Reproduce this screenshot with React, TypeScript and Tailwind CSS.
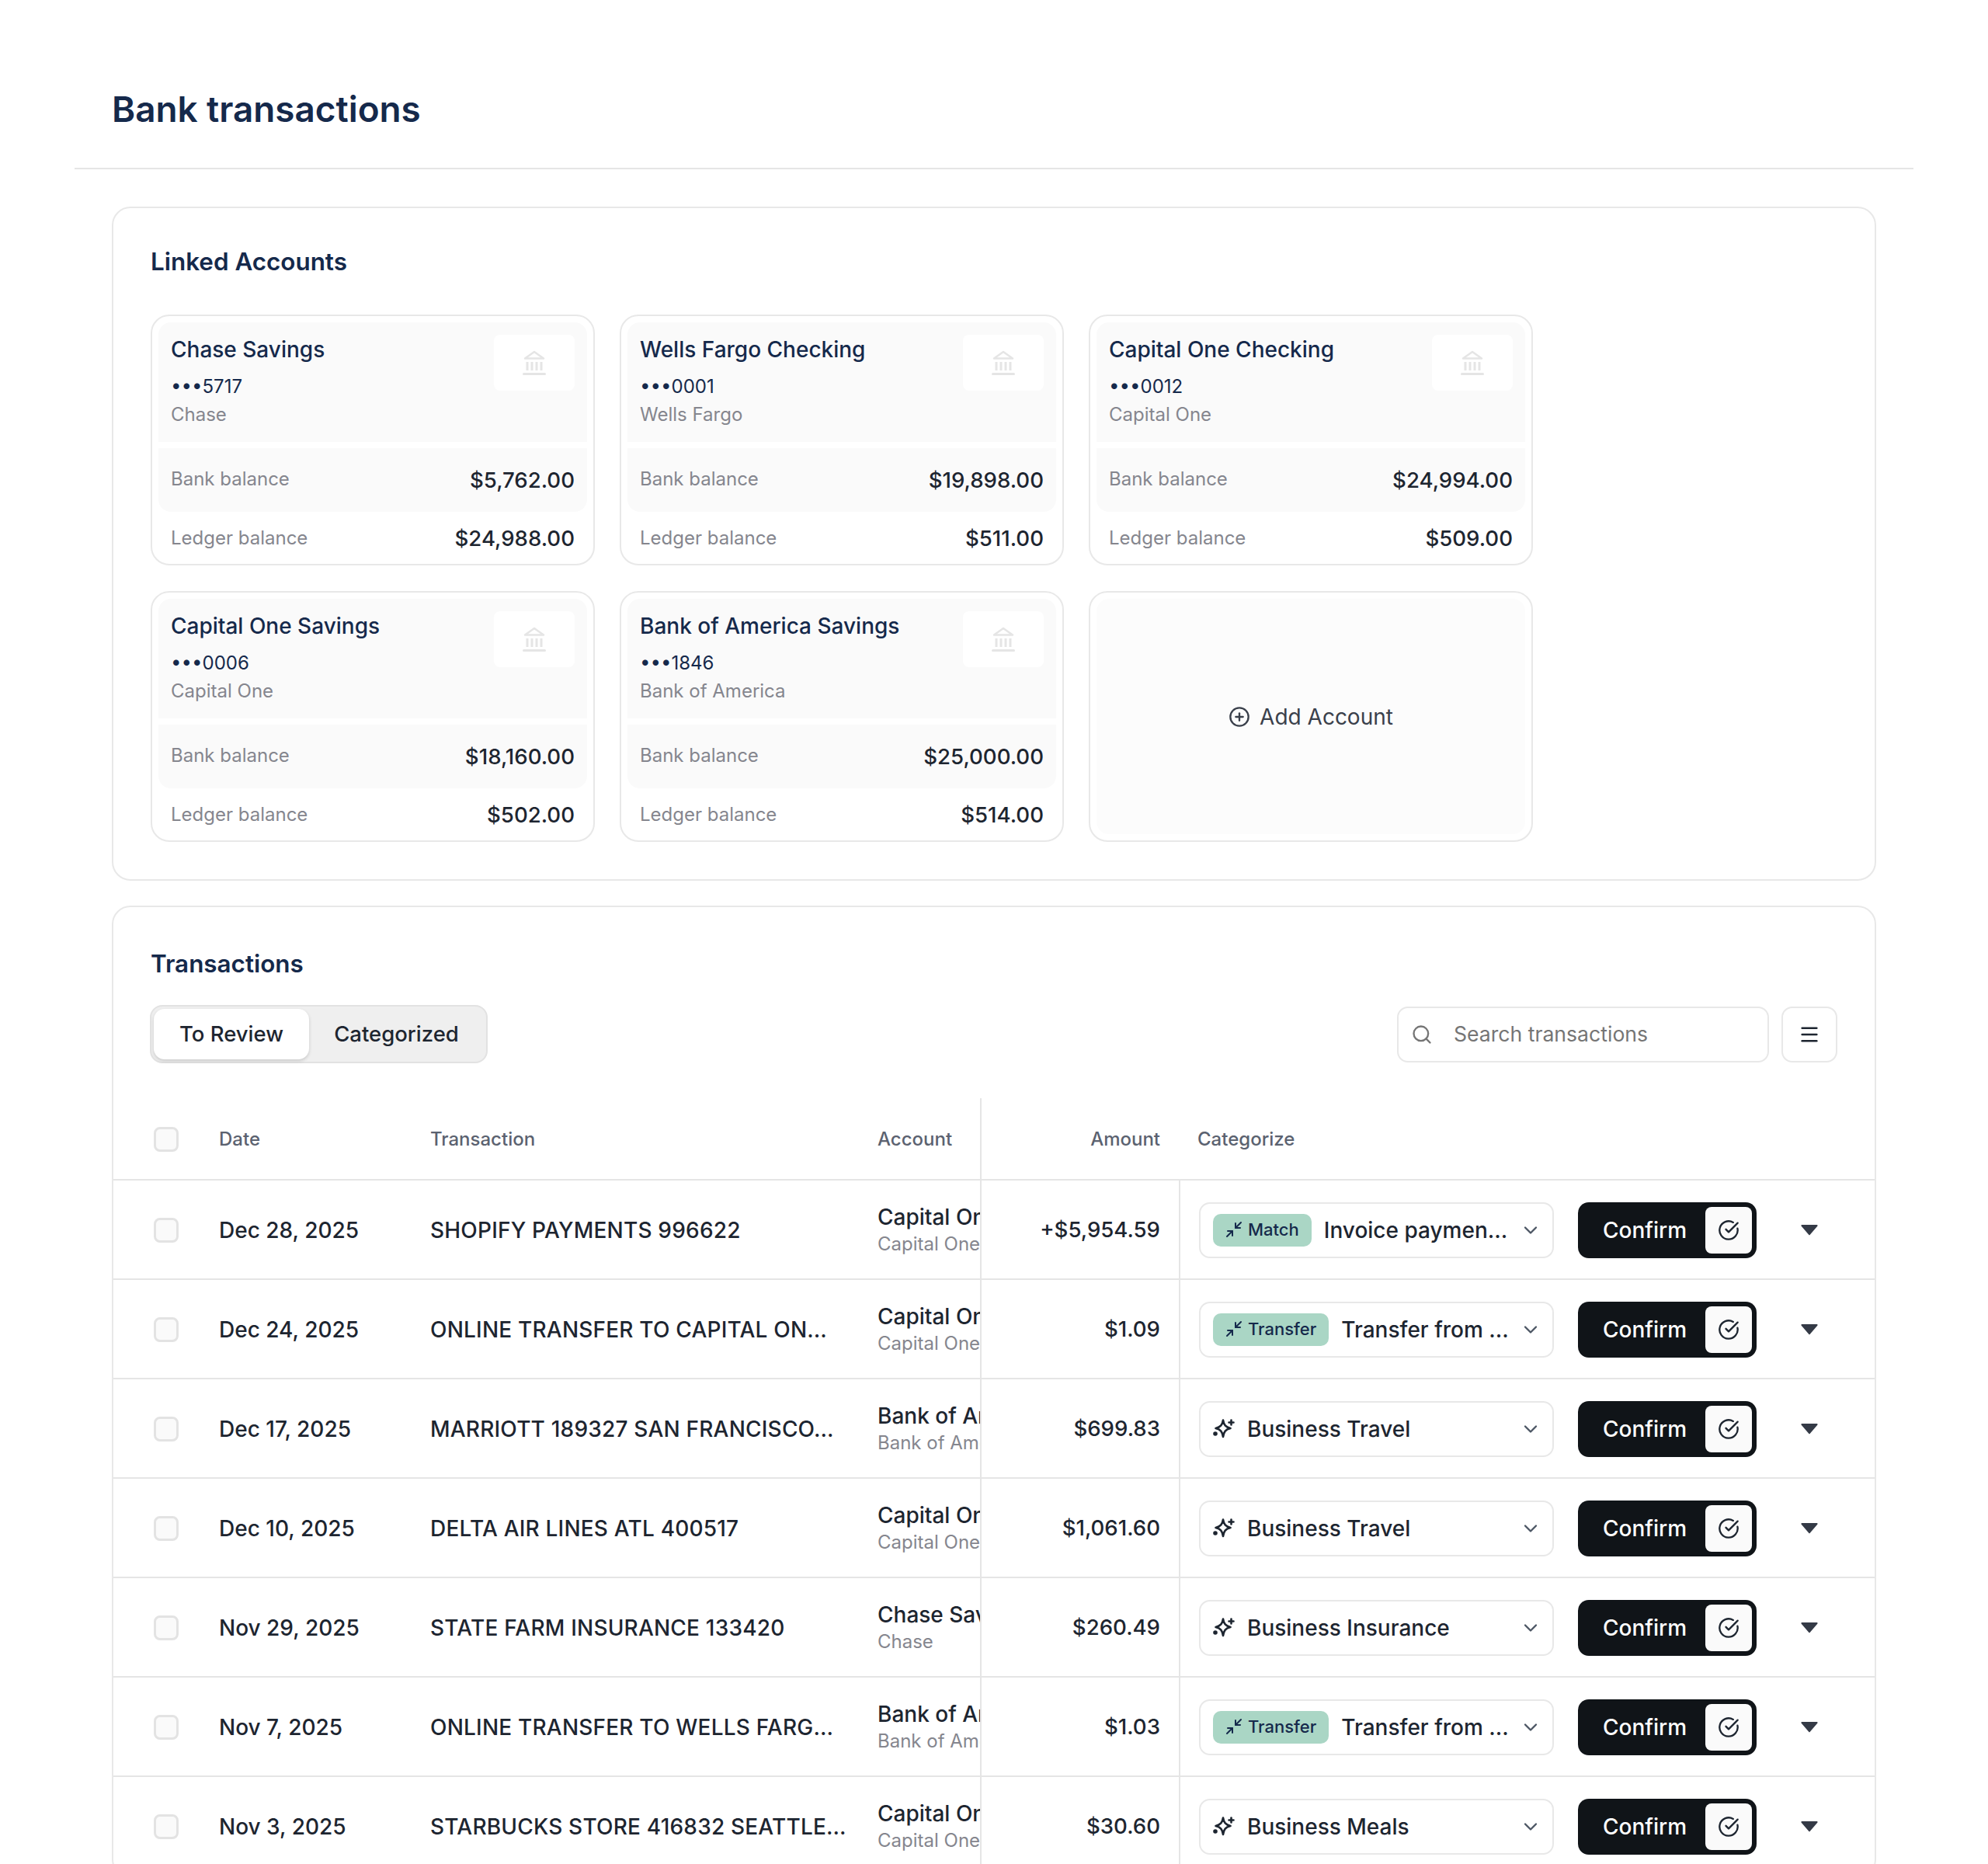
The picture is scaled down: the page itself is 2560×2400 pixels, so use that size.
import React from 'react';
import { ChevronDown, CircleCheckBig, CirclePlus, Menu, Minimize2, Search } from 'lucide-react';

interface Account {
  name: string;
  mask: string;
  bank: string;
  bankBalance: string;
  ledgerBalance: string;
}

interface Transaction {
  date: string;
  description: string;
  account: string;
  bank: string;
  amount: string;
  tag?: string;
  category: string;
}

const accounts: Account[] = [
  { name: 'Chase Savings', mask: '5717', bank: 'Chase', bankBalance: '$5,762.00', ledgerBalance: '$24,988.00' },
  { name: 'Wells Fargo Checking', mask: '0001', bank: 'Wells Fargo', bankBalance: '$19,898.00', ledgerBalance: '$511.00' },
  { name: 'Capital One Checking', mask: '0012', bank: 'Capital One', bankBalance: '$24,994.00', ledgerBalance: '$509.00' },
  { name: 'Capital One Savings', mask: '0006', bank: 'Capital One', bankBalance: '$18,160.00', ledgerBalance: '$502.00' },
  { name: 'Bank of America Savings', mask: '1846', bank: 'Bank of America', bankBalance: '$25,000.00', ledgerBalance: '$514.00' },
];

const transactions: Transaction[] = [
  { date: 'Dec 28, 2025', description: 'SHOPIFY PAYMENTS 996622', account: 'Capital One Checking', bank: 'Capital One', amount: '+$5,954.59', tag: 'Match', category: 'Invoice payment from Shopify' },
  { date: 'Dec 24, 2025', description: 'ONLINE TRANSFER TO CAPITAL ON…', account: 'Capital One Savings', bank: 'Capital One', amount: '$1.09', tag: 'Transfer', category: 'Transfer from Capital One' },
  { date: 'Dec 17, 2025', description: 'MARRIOTT 189327 SAN FRANCISCO…', account: 'Bank of America Savings', bank: 'Bank of America', amount: '$699.83', category: 'Business Travel' },
  { date: 'Dec 10, 2025', description: 'DELTA AIR LINES ATL 400517', account: 'Capital One Checking', bank: 'Capital One', amount: '$1,061.60', category: 'Business Travel' },
  { date: 'Nov 29, 2025', description: 'STATE FARM INSURANCE 133420', account: 'Chase Savings', bank: 'Chase', amount: '$260.49', category: 'Business Insurance' },
  { date: 'Nov 7, 2025', description: 'ONLINE TRANSFER TO WELLS FARG…', account: 'Bank of America Savings', bank: 'Bank of America', amount: '$1.03', tag: 'Transfer', category: 'Transfer from Bank of America' },
  { date: 'Nov 3, 2025', description: 'STARBUCKS STORE 416832 SEATTLE…', account: 'Capital One Checking', bank: 'Capital One', amount: '$30.60', category: 'Business Meals' },
];

function BankIcon() {
  return (
    <svg width="30" height="34" viewBox="0 0 30 34" fill="none" stroke="#e5e5e5">
      <path d="M3 11.5 15 3l12 8.500z" strokeWidth="2.500" strokeLinejoin="round" />
      <path d="M6 16v11M12 16v11M18 16v11M24 16v11" strokeWidth="3" />
      <path d="M1.500 31.500h27" strokeWidth="3" strokeLinecap="round" />
    </svg>
  );
}

function SparkIcon() {
  return (
    <svg width="28" height="28" viewBox="0 0 28 28" fill="none" stroke="#1d2530" strokeWidth="2.600" strokeLinejoin="round" strokeLinecap="round" className="shrink-0">
      <path d="M13 2.500c1 6 3 9 9.500 10.500-6.500 1.500-8.500 4.500-9.500 11-1-6.500-3-9.500-9.500-11 6.500-1.500 8.500-4.500 9.500-10.500z" />
      <path d="M23.500 2.500v6M20.500 5.500h6" />
      <circle cx="3" cy="20" r="1.500" fill="#1d2530" />
    </svg>
  );
}

function Checkbox() {
  return <div className="w-[32px] h-[32px] rounded-[8px] border-[3px] border-[#e3e3e3] bg-[#fafafa]"></div>;
}

function AccountCard({ account }: { account: Account }) {
  return (
    <div className="w-[572px] h-[323px] rounded-[24px] border-2 border-[#e8e8e8] px-[8px] pt-[8px] flex flex-col bg-white">
      <div className="h-[154px] bg-[#fafafa] rounded-t-[16px] px-[16px] pt-[14px] flex justify-between">
        <div className="flex flex-col">
          <div className="text-[28px] leading-[42px] font-medium text-[#15294b]">{account.name}</div>
          <div className="text-[24px] leading-[34px] mt-[10px] text-[#15294b]">•••{account.mask}</div>
          <div className="text-[24px] leading-[36px] mt-[1px] text-[#85868e]">{account.bank}</div>
        </div>
        <div className="w-[104px] h-[72px] mt-[2px] bg-white rounded-[8px] flex items-center justify-center">
          <BankIcon />
        </div>
      </div>
      <div className="h-[82px] mt-[8px] bg-[#fafafa] rounded-b-[16px] px-[16px] flex justify-between items-center">
        <span className="text-[24px] text-[#85868e] mb-[2px]">Bank balance</span>
        <span className="text-[27.600px] font-medium text-[#1d2530] mt-[1px]">{account.bankBalance}</span>
      </div>
      <div className="flex-1 px-[16px] flex justify-between items-center">
        <span className="text-[24px] text-[#85868e]">Ledger balance</span>
        <span className="text-[27.600px] font-medium text-[#1d2530] mt-[2px]">{account.ledgerBalance}</span>
      </div>
    </div>
  );
}

function TransactionRow({ row }: { row: Transaction }) {
  return (
    <div className="flex items-stretch h-[128px] border-b-2 border-[#e5e5e5]">
      <div className="w-[136px] pl-[52px] pt-[2px] flex items-center"><Checkbox /></div>
      <div className="w-[272px] pt-[2px] flex items-center text-[28px] font-medium text-[#1d2530]">{row.date}</div>
      <div className="w-[576px] pt-[2px] flex items-center text-[28px] font-medium tracking-[0.2px] text-[#1d2530]">
        <span className="w-[545px] truncate">{row.description}</span>
      </div>
      <div className="w-[134px] pb-[2px] border-r-2 border-[#e5e5e5] flex flex-col justify-center overflow-hidden whitespace-nowrap">
        <div className="text-[28px] leading-[40px] font-medium text-[#1d2530]">{row.account}</div>
        <div className="text-[24px] leading-[30px] text-[#85868e]">{row.bank}</div>
      </div>
      <div className="w-[254px] pr-[24px] pt-[2px] flex items-center justify-end text-[27.600px] font-medium text-[#1d2530]">{row.amount}</div>
      <div className="flex-1 border-l-2 border-[#e5e5e5] pl-[24px] pt-[2px] flex items-center">
        <div className="w-[457px] h-[72px] rounded-[14px] border-2 border-[#e8e8e8] pl-[16px] pr-[14px] flex items-center">
          {row.tag ? (
            <span className="h-[42px] pl-[15px] pr-[16px] pb-[2px] rounded-[10px] bg-[#aad6c5] flex items-center gap-[6px] text-[22px] font-medium text-[#15294b] shrink-0">
              <Minimize2 size={24} strokeWidth={2} color="#15294b" className="-my-[2px]" />
              {row.tag}
            </span>
          ) : (
            <SparkIcon />
          )}
          <span className="ml-[16px] flex-1 truncate text-[28px] font-medium text-[#1d2530]">{row.category}</span>
          <ChevronDown size={28} strokeWidth={2} color="#4b5563" className="ml-[8px] shrink-0" />
        </div>
        <div className="ml-[31px] w-[230px] h-[72px] rounded-[14px] bg-[#101418] p-[6px] pl-[32px] flex items-center justify-between">
          <span className="text-[28px] font-medium text-white">Confirm</span>
          <span className="w-[60px] h-[60px] rounded-[8px] bg-[#fafafa] flex items-center justify-center">
            <CircleCheckBig size={28} strokeWidth={2} color="#1d2530" />
          </span>
        </div>
        <div className="ml-[57px]">
          <svg width="22" height="14" viewBox="0 0 22 14" fill="#343a46">
            <path d="M1.500 0h19a1 1 0 0 1 .8 1.700l-9.500 11a1 1 0 0 1-1.600 0l-9.500-11A1 1 0 0 1 1.500 0z" />
          </svg>
        </div>
      </div>
    </div>
  );
}

export default function App() {
  return (
    <div className="w-[2560px] h-[2400px] overflow-hidden bg-white font-['Inter',sans-serif]">
      <div className="mx-[96px] h-[218px] border-b-2 border-[#e5e5e5] px-[48px] pt-[109px]">
        <h1 className="text-[45.800px] leading-[64px] font-semibold text-[#15294b]">Bank transactions</h1>
      </div>

      <div className="px-[144px] pt-[48px] flex flex-col gap-[32px]">
        {/* Linked accounts */}
        <div className="rounded-[24px] border-2 border-[#e8e8e8] px-[48px] pt-[45px] pb-[48px]">
          <h2 className="text-[31.400px] leading-[48px] font-semibold text-[#15294b] mb-[44px]">Linked Accounts</h2>
          <div className="flex flex-wrap gap-x-[32px] gap-y-[33px]">
            {accounts.map((account, i) => (
              <AccountCard key={i} account={account} />
            ))}
            <div className="w-[572px] h-[323px] rounded-[24px] border-2 border-[#e8e8e8] p-[8px]">
              <div className="h-full bg-[#fcfcfc] rounded-[16px] flex items-center justify-center gap-[12px] text-[28px] text-[#3a404b]">
                <CirclePlus size={28} strokeWidth={2} />
                Add Account
              </div>
            </div>
          </div>
        </div>

        {/* Transactions */}
        <div className="rounded-[24px] border-2 border-[#e8e8e8] pt-[49px]">
          <div className="px-[48px]">
            <h2 className="text-[31.400px] leading-[48px] font-semibold text-[#15294b] mb-[29px]">Transactions</h2>
            <div className="flex items-center justify-between">
              <div className="h-[75px] w-[435px] -ml-[1px] rounded-[16px] border-2 border-[#e2e2e2] bg-[#efefef] p-[3px] flex items-stretch text-[27.500px] font-medium text-[#1d2530]">
                <div className="w-[200px] rounded-[14px] bg-white shadow-[0_2px_4px_rgba(0,0,0,0.16)] flex items-center justify-center">To Review</div>
                <div className="flex-1 flex items-center justify-center">Categorized</div>
              </div>
              <div className="flex items-center gap-[16px]">
                <div className="w-[479px] h-[72px] rounded-[14px] border-2 border-[#e8e8e8] pl-[16px] flex items-center gap-[27px]">
                  <Search size={28} strokeWidth={2} color="#757575" />
                  <span className="text-[26.600px] text-[#757575]">Search transactions</span>
                </div>
                <div className="w-[72px] h-[72px] rounded-[14px] border-2 border-[#e8e8e8] flex items-center justify-center">
                  <Menu size={28} strokeWidth={2.200} color="#1d2530" />
                </div>
              </div>
            </div>
          </div>

          <div className="mt-[45px]">
            <div className="flex items-stretch h-[106px] border-b-2 border-[#e5e5e5] text-[24px] font-medium text-[#5b6270]">
              <div className="w-[136px] pl-[52px] pt-[2px] flex items-center"><Checkbox /></div>
              <div className="w-[272px] pt-[2px] flex items-center">Date</div>
              <div className="w-[576px] pt-[2px] flex items-center">Transaction</div>
              <div className="w-[134px] pt-[2px] border-r-2 border-[#e5e5e5] flex items-center">Account</div>
              <div className="w-[254px] pr-[24px] pt-[2px] flex items-center justify-end">Amount</div>
              <div className="flex-1 pl-[24px] pt-[2px] flex items-center">Categorize</div>
            </div>
            {transactions.map((row, i) => (
              <TransactionRow key={i} row={row} />
            ))}
          </div>
        </div>
      </div>
    </div>
  );
}
